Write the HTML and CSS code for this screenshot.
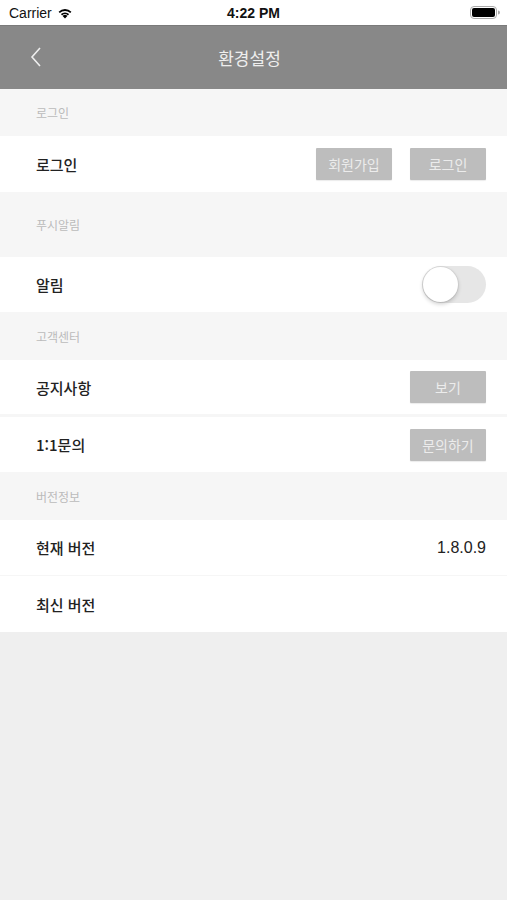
FILE: index.html
```html
<!DOCTYPE html>
<html lang="ko">
<head>
    <meta charset="UTF-8">
    <meta name="viewport" content="width=device-width, initial-scale=1.0">
    <title>환경설정</title>
    <link rel="stylesheet" href="styles.css">
</head>
<body>
    <div class="status-bar">
        <div class="status-left">
            <span class="carrier">Carrier</span>
            <svg class="wifi" width="16" height="12" viewBox="0 0 16 12">
                <path d="M8 11.5 L5.6 8.9 A3.4 3.4 0 0 1 10.4 8.9 Z" fill="#000"/>
                <path d="M3.9 7.1 A5.9 5.9 0 0 1 12.1 7.1 L10.9 8.4 A4.2 4.2 0 0 0 5.1 8.4 Z" fill="#000"/>
                <path d="M1.6 4.7 A9.2 9.2 0 0 1 14.4 4.7 L13.2 6 A7.5 7.5 0 0 0 2.8 6 Z" fill="#000"/>
            </svg>
        </div>
        <div class="status-time">4:22 PM</div>
        <div class="status-right">
            <svg width="30" height="13" viewBox="0 0 30 13">
                <rect x="0.5" y="0.5" width="26" height="12" rx="3.5" fill="none" stroke="#aaa"/>
                <rect x="2" y="2" width="23" height="9" rx="2" fill="#000"/>
                <path d="M28 4.5 A2 2 0 0 1 28 8.5 Z" fill="#aaa"/>
            </svg>
        </div>
    </div>

    <header class="nav-bar">
        <svg class="back" width="14" height="22" viewBox="0 0 14 22">
            <path d="M11 2 L3 11 L11 20" fill="none" stroke="#eee" stroke-width="1.6"/>
        </svg>
        <h1 class="nav-title">환경설정</h1>
    </header>

    <main class="settings">
        <div class="section-header h-login">로그인</div>
        <div class="row row-login">
            <span class="label">로그인</span>
            <div class="actions">
                <button class="btn">회원가입</button>
                <button class="btn">로그인</button>
            </div>
        </div>

        <div class="section-header h-push">푸시알림</div>
        <div class="row row-push">
            <span class="label">알림</span>
            <div class="switch"><div class="knob"></div></div>
        </div>

        <div class="section-header">고객센터</div>
        <div class="row row-notice">
            <span class="label">공지사항</span>
            <button class="btn">보기</button>
        </div>
        <div class="divider"></div>
        <div class="row row-qna">
            <span class="label">1:1문의</span>
            <button class="btn">문의하기</button>
        </div>

        <div class="section-header">버전정보</div>
        <div class="row row-version">
            <span class="label">현재 버전</span>
            <span class="value">1.8.0.9</span>
        </div>
        <div class="row row-latest">
            <span class="label">최신 버전</span>
        </div>
    </main>
</body>
</html>
```

FILE: styles.css
```css
body {
    margin: 0;
    background-color: #efefef;
    font-family: "Noto Sans CJK KR", "Noto Sans", sans-serif;
    width: 507px;
    min-height: 900px;
}
.status-bar {
    height: 25px;
    background: #fff;
    display: flex;
    align-items: center;
    justify-content: space-between;
    padding: 0 7px 0 9px;
    box-sizing: border-box;
    position: relative;
    font-family: "Liberation Sans", Arial, sans-serif;
}
.status-left {
    display: flex;
    align-items: center;
    gap: 5px;
}
.carrier {
    font-size: 14px;
    color: #111;
}
.status-time {
    position: absolute;
    left: 0;
    right: 0;
    text-align: center;
    font-size: 14px;
    font-weight: bold;
    color: #111;
    pointer-events: none;
}
.status-right svg {
    display: block;
}
.nav-bar {
    height: 64px;
    background: #888888;
    border-top: 1px solid #7a7a7a;
    box-sizing: border-box;
    display: flex;
    align-items: center;
    justify-content: center;
    padding-right: 8px;
    position: relative;
}
.back {
    position: absolute;
    left: 29px;
    top: 20px;
}
.nav-title {
    margin: 0;
    font-size: 17px;
    font-weight: 400;
    color: #eeeeee;
}
.settings {
    display: flex;
    flex-direction: column;
}
.section-header {
    height: 48px;
    background: #f6f6f6;
    color: #bbbbbb;
    font-size: 12px;
    padding-left: 36px;
    display: flex;
    align-items: center;
}
.h-login {
    height: 47px;
}
.h-push {
    height: 65px;
}
.row {
    height: 55px;
    background: #fff;
    display: flex;
    align-items: center;
    justify-content: space-between;
    padding: 0 21px 0 36px;
}
.row-login {
    height: 56px;
}
.row-notice {
    height: 54px;
}
.row-latest {
    height: 56px;
    border-top: 1px solid #f6f6f6;
}
.label {
    font-size: 15px;
    font-weight: 500;
    color: #222;
}
.value {
    font-family: "Liberation Sans", Arial, sans-serif;
    font-size: 16px;
    color: #222;
}
.actions {
    display: flex;
    gap: 18px;
}
.btn {
    width: 76px;
    height: 32px;
    border: none;
    border-radius: 1px;
    background: #bdbdbd;
    color: #ececec;
    font-family: "Noto Sans CJK KR", sans-serif;
    font-size: 14px;
    padding: 0;
    box-shadow: 0 1px 1px rgba(0,0,0,0.08);
}
.divider {
    height: 3px;
    background: #f6f6f6;
}
.switch {
    width: 64px;
    height: 37px;
    border-radius: 19px;
    background: #e6e6e6;
    position: relative;
}
.knob {
    position: absolute;
    left: 1px;
    top: 1px;
    width: 35px;
    height: 35px;
    border-radius: 50%;
    background: #fff;
    box-shadow: 0 2px 4px rgba(0,0,0,0.2), 0 0 0 1px rgba(0,0,0,0.05);
}
```
